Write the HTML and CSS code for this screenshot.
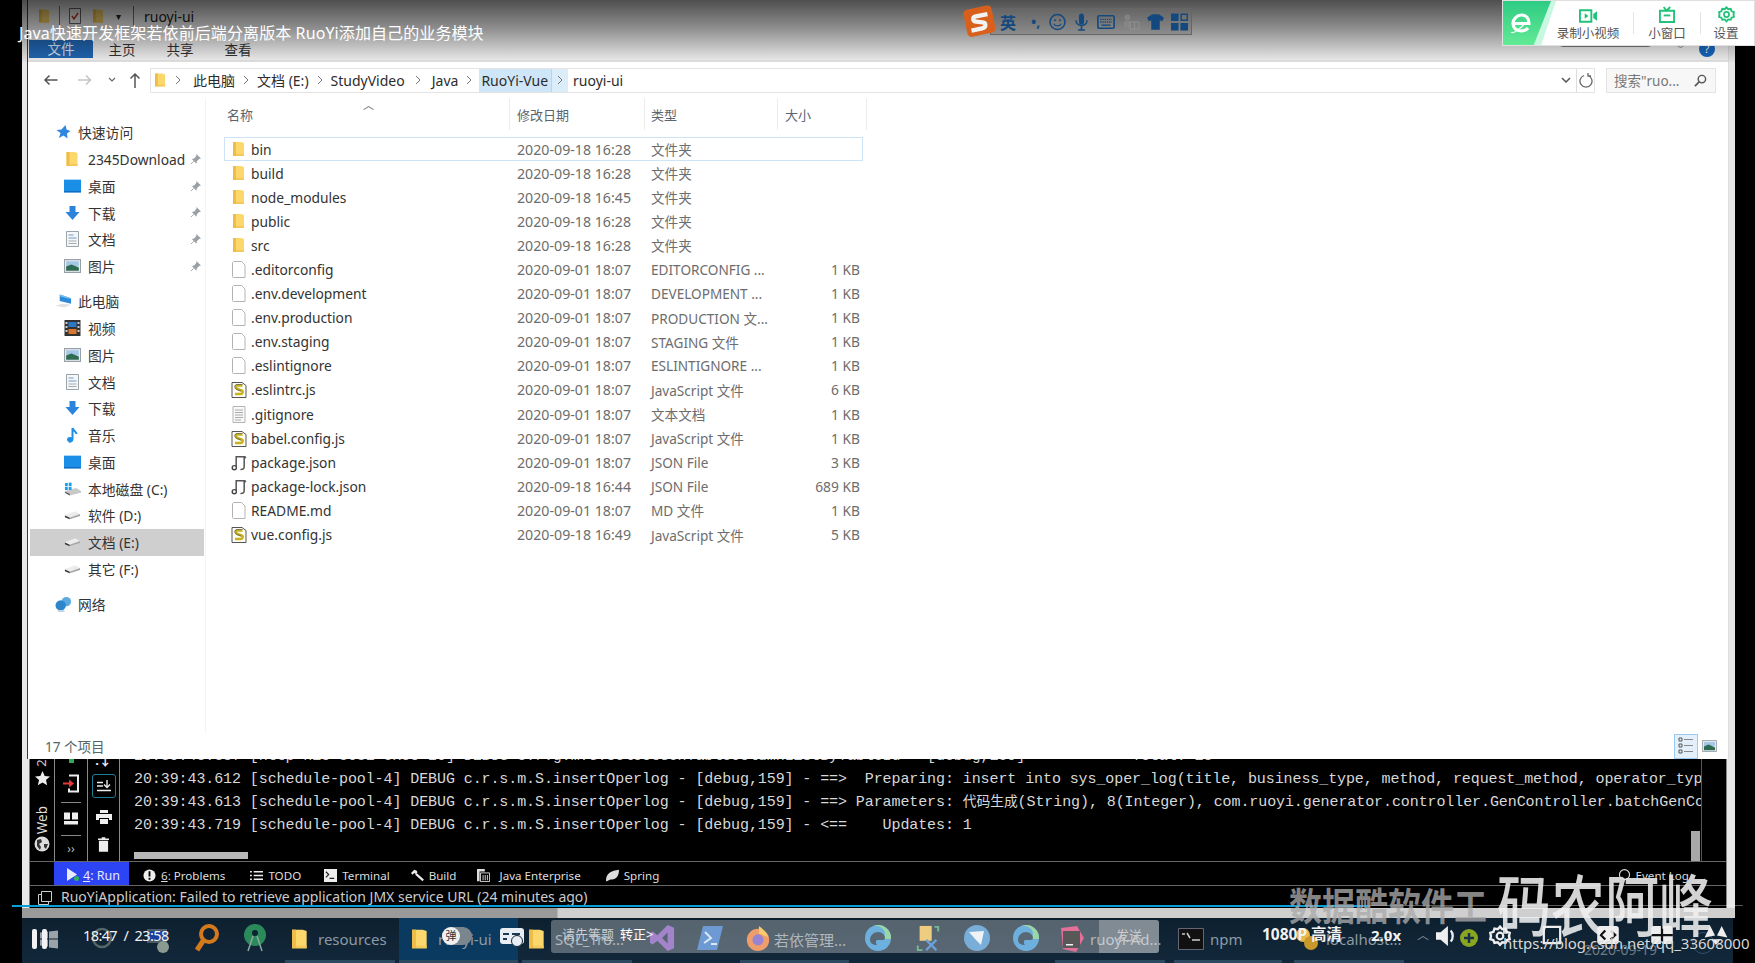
FILE: index.html
```html
<!DOCTYPE html>
<html lang="zh-CN">
<head>
<meta charset="utf-8">
<title>ruoyi-ui</title>
<link rel="stylesheet" href="styles.css">
</head>
<body>
<svg class="sprite" aria-hidden="true">
  <symbol id="i-folder" viewBox="0 0 12 16"><path fill="#fbd76c" d="M0 1h8l3 1v13H0z"/><path fill="#eebc48" d="M0 1h3v14H0z"/><path fill="#f6c95a" d="M3 13h8v2H3z"/></symbol>
  <symbol id="i-doc" viewBox="0 0 14 17"><path fill="#fff" stroke="#b4b4b4" d="M1.500 .5h8l3.500 3.500v12.500h-11.500a1 1 0 0 1-1-1v-14z"/></symbol>
  <symbol id="i-txt" viewBox="0 0 14 17"><path fill="#f8f8f8" stroke="#b4b4b4" d="M1 .5h12v16H1z"/><path stroke="#aaa" d="M3 4h8M3 6.500h8M3 9h8M3 11.500h8M3 14h6"/></symbol>
  <symbol id="i-js" viewBox="0 0 16 17"><path fill="#fdfdf6" stroke="#555" d="M1 1.500h10l4 3v12H1z"/><path fill="none" stroke="#c9b21a" stroke-width="2.600" d="M11.500 4.500H6.500c-2 0-2 3 0 3.500l4 1.500c2 .8 1 3.500-1 3.500H4"/><path fill="none" stroke="#555" stroke-width=".7" d="M11.500 3.500H6c-3 0-3 4 0 5l4 1.500"/></symbol>
  <symbol id="i-note" viewBox="0 0 17 17"><path fill="none" stroke="#555" stroke-width="1.600" d="M5.500 13V2.500h9c.8 0 1 .8.800 1.500M14 2.500V13c0 2-2 3-4 3"/><circle cx="3.500" cy="14" r="2.200" fill="#fff" stroke="#444" stroke-width="1.500"/></symbol>
  <symbol id="i-star" viewBox="0 0 16 16"><path fill="#2f86e0" d="M10 1l1 4.500 4 1.500-3.500 2.500 .5 5-4-3-4.500 2.500 1.500-5L1 6l5-.5z"/></symbol>
  <symbol id="i-pc" viewBox="0 0 18 16"><path fill="#dfe3e6" d="M0 13l8-2 9 1-7 3z"/><path fill="#2d8ad8" d="M5 1l12 4v6L5 8z"/><path fill="#7cc0f0" d="M5 1l12 4-1 1L5 3z"/></symbol>
  <symbol id="i-desk" viewBox="0 0 16 14"><path fill="#1b8fe8" d="M0 1h16v12H0z"/><path fill="#0f5fb0" d="M0 12h16v1H0z"/></symbol>
  <symbol id="i-down" viewBox="0 0 16 16"><path fill="#2c83dc" d="M5 1h6v6h4l-7 8-7-8h4z"/></symbol>
  <symbol id="i-page" viewBox="0 0 14 16"><path fill="#f4f6f8" stroke="#9ba3aa" d="M1 .5h12v15H1z"/><path stroke="#6f9cc5" d="M3 4h5M3 7h8"/><path stroke="#aaa" d="M3 10h8M3 12.500h8"/></symbol>
  <symbol id="i-pic" viewBox="0 0 16 13"><path fill="#f0f2f4" stroke="#98a0a8" d="M.5.500h15v12H.5z"/><path fill="#a5c8e6" d="M2 2h12v5H2z"/><path fill="#2f6b52" d="M2 7l5-2 7 3v3H2z"/></symbol>
  <symbol id="i-film" viewBox="0 0 16 16"><path fill="#333" d="M0 0h16v16H0z"/><path fill="#2a78c8" d="M4 2h8v5H4z"/><path fill="#d8772e" d="M4 9h8v5H4z"/><path fill="#ccc" d="M1 2h2v2H1zM1 6h2v2H1zM1 10h2v2H1zM13 2h2v2h-2zM13 6h2v2h-2zM13 10h2v2h-2z"/></symbol>
  <symbol id="i-music" viewBox="0 0 12 16"><path fill="none" stroke="#1c90e8" stroke-width="2" d="M6 1v11c0 2-2 3-3.500 2.500M6 1c.5 3 4 3 4 6"/><ellipse cx="3.500" cy="12.500" rx="3" ry="2.500" fill="#1c90e8"/></symbol>
  <symbol id="i-diskw" viewBox="0 0 18 14"><path fill="#c9c9c9" d="M1 9l12-3 5 3v2L6 14l-5-3z"/><path fill="#555" d="M1 10l5 2v2l-5-3z"/><path fill="#1c9be8" d="M1 1l3-.5V4H1zM5 .5l3-.5v4H5zM1 5h3v3H1zM5 5h3v3H5z"/></symbol>
  <symbol id="i-disk" viewBox="0 0 18 10"><path fill="#ececec" d="M1 5l11-4 5 3v2L6 9.500 1 7z"/><path fill="#a8a8a8" d="M17 4v2L6 9.500V8z"/><path fill="#333" d="M1 5.500l5 2.500v1.500L1 7.500z"/></symbol>
  <symbol id="i-net" viewBox="0 0 18 17"><circle cx="12" cy="6" r="5" fill="#5ba9e0"/><circle cx="6" cy="10" r="5.500" fill="#2d86cc"/><path fill="#c5d4de" d="M3 15h7v2H3z"/></symbol>
  <symbol id="i-pin" viewBox="0 0 12 12"><path fill="#9aa0a6" d="M7 0l5 5-2 .5-2.500 2.500-.5 2.500-5-5 2.500-.5L7 2z"/><path stroke="#9aa0a6" d="M4 8l-3 3"/></symbol>
  <symbol id="i-green-rec" viewBox="0 0 20 14"><path fill="none" stroke="#22c27a" stroke-width="2" d="M1 1h12v12H1z"/><path fill="#22c27a" d="M6 4l4 3-4 3zM15 5l4-3v10l-4-3z"/></symbol>
  <symbol id="i-green-tv" viewBox="0 0 17 18"><path fill="none" stroke="#22c27a" stroke-width="2" d="M1 5h15v12H1zM5 1l3 4 4-4"/><path fill="#22c27a" d="M5 9h7v2H5z"/></symbol>
  <symbol id="i-gear" viewBox="0 0 20 20"><path fill="none" stroke="currentColor" stroke-width="2.200" d="M10 1.500l2 2.300 3-.5 1 2.900 2.800 1-.6 2.800.6 2.800-2.800 1-1 2.400-3-.4-2 2.200-2-2.200-3 .4-1-2.400-2.800-1 .6-2.800-.6-2.800 2.800-1 1-2.900 3 .5z"/><circle cx="10" cy="10" r="3" fill="none" stroke="currentColor" stroke-width="2"/></symbol>
  <symbol id="i-chev" viewBox="0 0 8 10"><path fill="none" stroke="#777" d="M2 1l4 4-4 4"/></symbol>
  <symbol id="i-edge" viewBox="0 0 26 26"><circle cx="13" cy="13" r="13" fill="#2f8fd0"/><path fill="#70c480" d="M26 14A13 13 0 0 0 8 1c5-1 12 2 12 8 0 3-2 5-5 5h11z"/><path fill="#12283a" d="M5 15c0-5 4-8 8-8s7 3 7 6c0 2-2 2-4 2h-3c-2 0-3 2-1 5-4 0-7-2-7-5z"/></symbol>
</svg>

<div class="frame">
  <section class="explorer">
    <header class="ribbon">
      <div class="qat">
        <svg class="qat-folder"><use href="#i-folder"/></svg>
        <span class="qat-sep"></span>
        <svg class="qat-check" viewBox="0 0 12 16"><path fill="#fff" stroke="#666" d="M.5.500h11v15H.5z"/><path fill="none" stroke="#c0392b" stroke-width="1.500" d="M3 8l2 3 4-6"/></svg>
        <svg class="qat-folder2"><use href="#i-folder"/></svg>
        <span class="qat-drop">▾</span>
        <span class="qat-sep"></span>
        <span class="qat-title">ruoyi-ui</span>
      </div>
      <nav class="tabs">
        <span class="tab tab-on">文件</span>
        <span class="tab">主页</span>
        <span class="tab">共享</span>
        <span class="tab">查看</span>
        <span class="ribbon-pill"></span>
        <span class="ribbon-chev">﹀</span>
        <span class="ribbon-help">?</span>
      </nav>
    </header>

    <div class="addr">
      <svg class="nav-back" viewBox="0 0 14 12"><path fill="none" stroke="#555" stroke-width="1.500" d="M14 6H2M6 1.500L1.500 6 6 10.500"/></svg>
      <svg class="nav-fwd" viewBox="0 0 14 12"><path fill="none" stroke="#c4c4c4" stroke-width="1.500" d="M0 6h12M8 1.500L12.500 6 8 10.500"/></svg>
      <svg class="nav-menu" viewBox="0 0 8 6"><path fill="none" stroke="#666" stroke-width="1.200" d="M1 1l3 3 3-3"/></svg>
      <svg class="nav-up" viewBox="0 0 12 16"><path fill="none" stroke="#555" stroke-width="1.500" d="M6 16V2M1.500 6.500L6 2l4.500 4.500"/></svg>
      <div class="crumbs">
        <svg class="crumb-folder"><use href="#i-folder"/></svg>
        <svg class="chev chev-first"><use href="#i-chev"/></svg>
        <span class="crumb">此电脑</span>
        <svg class="chev"><use href="#i-chev"/></svg>
        <span class="crumb">文档 (E:)</span>
        <svg class="chev"><use href="#i-chev"/></svg>
        <span class="crumb">StudyVideo</span>
        <svg class="chev chev-java"><use href="#i-chev"/></svg>
        <span class="crumb">Java</span>
        <svg class="chev"><use href="#i-chev"/></svg>
        <span class="crumb-hot"><span class="crumb-hot-t">RuoYi-Vue</span><span class="crumb-hot-c"><svg class="chev"><use href="#i-chev"/></svg></span></span>
        <span class="crumb crumb-last">ruoyi-ui</span>
        <span class="crumb-end">
          <svg class="crumb-dd" viewBox="0 0 10 6"><path fill="none" stroke="#555" stroke-width="1.500" d="M1 1l4 4 4-4"/></svg>
          <span class="crumb-ref"><svg viewBox="0 0 14 16" class="ref-ico"><path fill="none" stroke="#666" stroke-width="1.300" d="M5 3.500A6 6 0 1 0 9 3.500M9 1v3h3"/></svg></span>
        </span>
      </div>
      <div class="search"><span>搜索"ruo...</span><svg class="search-ico" viewBox="0 0 14 14"><circle cx="8.500" cy="5.500" r="4" fill="none" stroke="#555" stroke-width="1.500"/><path stroke="#555" stroke-width="1.800" d="M5.500 8.500L1 13"/></svg></div>
    </div>

    <div class="body">
      <aside class="side">
        <div class="s-row s-head"><svg class="si"><use href="#i-star"/></svg><span>快速访问</span></div>
        <div class="s-row"><svg class="si si-f"><use href="#i-folder"/></svg><span>2345Download</span><svg class="pin"><use href="#i-pin"/></svg></div>
        <div class="s-row"><svg class="si"><use href="#i-desk"/></svg><span>桌面</span><svg class="pin"><use href="#i-pin"/></svg></div>
        <div class="s-row"><svg class="si"><use href="#i-down"/></svg><span>下载</span><svg class="pin"><use href="#i-pin"/></svg></div>
        <div class="s-row"><svg class="si"><use href="#i-page"/></svg><span>文档</span><svg class="pin"><use href="#i-pin"/></svg></div>
        <div class="s-row"><svg class="si"><use href="#i-pic"/></svg><span>图片</span><svg class="pin"><use href="#i-pin"/></svg></div>
        <div class="s-row s-head s-gap"><svg class="si"><use href="#i-pc"/></svg><span>此电脑</span></div>
        <div class="s-row"><svg class="si"><use href="#i-film"/></svg><span>视频</span></div>
        <div class="s-row"><svg class="si"><use href="#i-pic"/></svg><span>图片</span></div>
        <div class="s-row"><svg class="si"><use href="#i-page"/></svg><span>文档</span></div>
        <div class="s-row"><svg class="si"><use href="#i-down"/></svg><span>下载</span></div>
        <div class="s-row"><svg class="si"><use href="#i-music"/></svg><span>音乐</span></div>
        <div class="s-row"><svg class="si"><use href="#i-desk"/></svg><span>桌面</span></div>
        <div class="s-row"><svg class="si"><use href="#i-diskw"/></svg><span>本地磁盘 (C:)</span></div>
        <div class="s-row"><svg class="si"><use href="#i-disk"/></svg><span>软件 (D:)</span></div>
        <div class="s-row s-sel"><svg class="si"><use href="#i-disk"/></svg><span>文档 (E:)</span></div>
        <div class="s-row"><svg class="si"><use href="#i-disk"/></svg><span>其它 (F:)</span></div>
        <div class="s-row s-head s-gap"><svg class="si"><use href="#i-net"/></svg><span>网络</span></div>
      </aside>
      <main class="list">
        <div class="thead">
          <span class="th">名称<span class="sort">︿</span></span>
          <span class="th th-d">修改日期</span>
          <span class="th th-t">类型</span>
          <span class="th th-s">大小</span>
        </div>
        <div class="row row-sel"><span class="n"><svg class="fi fi-f"><use href="#i-folder"/></svg>bin</span><span class="d">2020-09-18 16:28</span><span class="t">文件夹</span><span class="z"></span></div>
        <div class="row"><span class="n"><svg class="fi fi-f"><use href="#i-folder"/></svg>build</span><span class="d">2020-09-18 16:28</span><span class="t">文件夹</span><span class="z"></span></div>
        <div class="row"><span class="n"><svg class="fi fi-f"><use href="#i-folder"/></svg>node_modules</span><span class="d">2020-09-18 16:45</span><span class="t">文件夹</span><span class="z"></span></div>
        <div class="row"><span class="n"><svg class="fi fi-f"><use href="#i-folder"/></svg>public</span><span class="d">2020-09-18 16:28</span><span class="t">文件夹</span><span class="z"></span></div>
        <div class="row"><span class="n"><svg class="fi fi-f"><use href="#i-folder"/></svg>src</span><span class="d">2020-09-18 16:28</span><span class="t">文件夹</span><span class="z"></span></div>
        <div class="row"><span class="n"><svg class="fi"><use href="#i-doc"/></svg>.editorconfig</span><span class="d">2020-09-01 18:07</span><span class="t">EDITORCONFIG ...</span><span class="z">1 KB</span></div>
        <div class="row"><span class="n"><svg class="fi"><use href="#i-doc"/></svg>.env.development</span><span class="d">2020-09-01 18:07</span><span class="t">DEVELOPMENT ...</span><span class="z">1 KB</span></div>
        <div class="row"><span class="n"><svg class="fi"><use href="#i-doc"/></svg>.env.production</span><span class="d">2020-09-01 18:07</span><span class="t">PRODUCTION 文...</span><span class="z">1 KB</span></div>
        <div class="row"><span class="n"><svg class="fi"><use href="#i-doc"/></svg>.env.staging</span><span class="d">2020-09-01 18:07</span><span class="t">STAGING 文件</span><span class="z">1 KB</span></div>
        <div class="row"><span class="n"><svg class="fi"><use href="#i-doc"/></svg>.eslintignore</span><span class="d">2020-09-01 18:07</span><span class="t">ESLINTIGNORE ...</span><span class="z">1 KB</span></div>
        <div class="row"><span class="n"><svg class="fi"><use href="#i-js"/></svg>.eslintrc.js</span><span class="d">2020-09-01 18:07</span><span class="t">JavaScript 文件</span><span class="z">6 KB</span></div>
        <div class="row"><span class="n"><svg class="fi"><use href="#i-txt"/></svg>.gitignore</span><span class="d">2020-09-01 18:07</span><span class="t">文本文档</span><span class="z">1 KB</span></div>
        <div class="row"><span class="n"><svg class="fi"><use href="#i-js"/></svg>babel.config.js</span><span class="d">2020-09-01 18:07</span><span class="t">JavaScript 文件</span><span class="z">1 KB</span></div>
        <div class="row"><span class="n"><svg class="fi"><use href="#i-note"/></svg>package.json</span><span class="d">2020-09-01 18:07</span><span class="t">JSON File</span><span class="z">3 KB</span></div>
        <div class="row"><span class="n"><svg class="fi"><use href="#i-note"/></svg>package-lock.json</span><span class="d">2020-09-18 16:44</span><span class="t">JSON File</span><span class="z">689 KB</span></div>
        <div class="row"><span class="n"><svg class="fi"><use href="#i-doc"/></svg>README.md</span><span class="d">2020-09-01 18:07</span><span class="t">MD 文件</span><span class="z">1 KB</span></div>
        <div class="row"><span class="n"><svg class="fi"><use href="#i-js"/></svg>vue.config.js</span><span class="d">2020-09-18 16:49</span><span class="t">JavaScript 文件</span><span class="z">5 KB</span></div>
      </main>
    </div>

    <footer class="status">
      <span class="status-t">17 个项目</span>
      <span class="view view-on"><svg class="view-i" viewBox="0 0 16 18"><path fill="none" stroke="#555" d="M1 1h3v3H1zM1 7h3v3H1zM1 13h3v3H1z"/><path stroke="#888" d="M6 2.500h9M6 8.500h9M6 14.500h9"/></svg></span>
      <span class="view"><svg class="view-i2"><use href="#i-pic"/></svg></span>
    </footer>
  </section>

  <section class="ide">
    <div class="ide-main">
      <div class="tw tw1">
        <span class="tw1-num">2</span>
        <svg class="tw-star" viewBox="0 0 16 16"><path fill="#eee" d="M8 0l2.300 5.300 5.700.5-4.300 3.800 1.300 5.700L8 12.300l-5 3 1.300-5.700L0 5.800l5.700-.5z"/></svg>
        <span class="tw-web">Web</span>
        <svg class="tw-globe" viewBox="0 0 16 16"><circle cx="8" cy="8" r="7.500" fill="#ddd"/><path fill="#333" d="M3 4l4-1 1 3-3 2 2 3-1 3-3-4zM10 8l4 0-2 5-2-2z"/></svg>
      </div>
      <div class="tw tw2">
        <span class="tw-dot"></span>
        <svg class="tw-login" viewBox="0 0 16 18"><path fill="none" stroke="#eee" stroke-width="2" d="M6 1h9v16H6v-3"/><path fill="#e53935" d="M0 8h6V5l5 4-5 4v-3H0z"/></svg>
        <span class="tw-sep"></span>
        <svg class="tw-lay" viewBox="0 0 14 12"><path fill="#eee" d="M0 0h6v7H0zM8 0h6v7H8zM0 8.500h14V12H0z"/></svg>
        <span class="tw-sep"></span>
        <span class="tw-more">››</span>
      </div>
      <div class="tw tw3">
        <span class="tw-partial">.↓</span>
        <span class="tw-box"><svg class="tw-scroll" viewBox="0 0 14 12"><path stroke="#eee" stroke-width="1.400" d="M0 2.500h6M0 6h6M0 10.500h14M10 0v7"/><path fill="none" stroke="#eee" stroke-width="1.400" d="M7 4.500l3 3 3-3"/></svg></span>
        <svg class="tw-print" viewBox="0 0 16 14"><path fill="#eee" d="M4 0h8v3H4zM0 4h16v6h-3V8H3v2H0zM4 9h8v5H4z"/></svg>
        <svg class="tw-trash" viewBox="0 0 12 16"><path fill="#eee" d="M4 0h4v1.500h4V3H0V1.500h4zM1 4h10v12H1z"/></svg>
      </div>
      <div class="log">
        <pre class="log-l">20:39:43.387 [http-nio-8081-exec-20] DEBUG c.r.g.m.G.selectGenTableColumnListByTableId - [debug,159] - &lt;==      Total: 18</pre>
        <pre class="log-l">20:39:43.612 [schedule-pool-4] DEBUG c.r.s.m.S.insertOperlog - [debug,159] - ==&gt;  Preparing: insert into sys_oper_log(title, business_type, method, request_method, operator_type, oper_name)</pre>
        <pre class="log-l">20:39:43.613 [schedule-pool-4] DEBUG c.r.s.m.S.insertOperlog - [debug,159] - ==&gt; Parameters: <span class="log-cjk">代码生成</span>(String), 8(Integer), com.ruoyi.generator.controller.GenController.batchGenCode()</pre>
        <pre class="log-l">20:39:43.719 [schedule-pool-4] DEBUG c.r.s.m.S.insertOperlog - [debug,159] - &lt;==    Updates: 1</pre>
        <span class="log-hbar"></span>
        <span class="log-vbar"></span>
      </div>
    </div>
    <div class="tool">
      <span class="t-run"><svg class="t-play" viewBox="0 0 12 14"><path fill="#e8eaff" d="M0 0l11 7-11 7z"/></svg><span class="t-dotg"></span><span><u>4</u>: Run</span></span>
      <span class="t-item t-prob"><svg class="t-ico" viewBox="0 0 14 14"><circle cx="7" cy="7" r="6.500" fill="#eee"/><path fill="#000" d="M6 2.500h2v5.500H6zM6 9.500h2v2H6z"/></svg><span><u>6</u>: Problems</span></span>
      <span class="t-item t-todo"><svg class="t-ico" viewBox="0 0 14 12"><path stroke="#eee" stroke-width="1.600" d="M0 2h2M4 2h10M0 6h2M4 6h10M0 10h2M4 10h10"/></svg><span>TODO</span></span>
      <span class="t-item t-term"><svg class="t-ico" viewBox="0 0 14 14"><path fill="#eee" d="M0 0h14v14H0z"/><path fill="none" stroke="#222" stroke-width="1.300" d="M2 3l3 3-3 3M6 10h5"/></svg><span>Terminal</span></span>
      <span class="t-item t-build"><svg class="t-ico" viewBox="0 0 16 14"><path fill="#eee" d="M0 4l4-4 3 1 1 2-2 2-2-1-2 2z"/><path stroke="#eee" stroke-width="2.500" d="M6 5l9 8"/></svg><span>Build</span></span>
      <span class="t-item t-jee"><svg class="t-ico" viewBox="0 0 15 15"><path fill="#ddd" d="M0 0h9v3H3v11H0z"/><path fill="none" stroke="#eee" d="M4 4.500h10.500v10H4z"/><path stroke="#eee" d="M7 7v6M9.500 7v6M12 7v6"/></svg><span class="t-jee-t">Java Enterprise</span></span>
      <span class="t-item t-spring"><svg class="t-ico" viewBox="0 0 15 13"><path fill="#dcdcdc" d="M0 13C0 4 6 1 15 0c0 8-4 12-10 11L1 13z"/></svg><span>Spring</span></span>
      <span class="t-item t-event"><svg class="t-ico" viewBox="0 0 13 15"><circle cx="6.500" cy="6.500" r="5.800" fill="none" stroke="#ddd" stroke-width="1.300"/><path stroke="#ddd" stroke-width="1.300" d="M9 12l3 3"/></svg><span>Event Log</span></span>
    </div>
    <div class="ide-status">
      <svg class="st-ico" viewBox="0 0 14 14"><path fill="none" stroke="#ccc" d="M3.500.5h10v10h-10zM3 3.500H.5v10h10V11"/></svg>
      <span>RuoYiApplication: Failed to retrieve application JMX service URL (24 minutes ago)</span>
    </div>
  </section>
  <div class="hscroll"></div>
</div>

<div class="taskbar">
  <span class="tb-win"><svg class="tb-winlogo" viewBox="0 0 18 18"><path fill="#9aa3aa" d="M0 2l8-1v7H0zM9 1l9-1v8H9zM0 9h8v7l-8-1zM9 9h9v9l-9-1z"/></svg></span>
  <span class="tb-cell"><svg class="tb-circle" viewBox="0 0 22 22"><circle cx="11" cy="11" r="9" fill="none" stroke="#566" stroke-width="2.500"/></svg></span>
  <span class="tb-cell tb-gap"><svg class="tb-pc" viewBox="0 0 24 24"><path fill="#4a5a66" d="M0 0h20v14H0z"/><path fill="#1a3fa0" d="M2 2h16v9H2z"/><circle cx="16" cy="18" r="6" fill="#8a9a90"/></svg></span>
  <span class="tb-cell"><svg class="tb-find" viewBox="0 0 24 28"><circle cx="14" cy="10" r="8" fill="none" stroke="#d57a1c" stroke-width="4"/><path stroke="#d57a1c" stroke-width="5" d="M8 17L2 26"/></svg></span>
  <span class="tb-cell"><svg class="tb-android" viewBox="0 0 24 28"><circle cx="12" cy="11" r="11" fill="#2b8a5a"/><circle cx="12" cy="9" r="3" fill="#0d2233"/><path stroke="#8fa5a0" stroke-width="1.500" d="M10 12L5 27M14 12l5 15"/></svg></span>
  <span class="tb-task tb-t1"><svg class="tb-folder"><use href="#i-folder"/></svg><span>resources</span></span>
  <span class="tb-task tb-active"><svg class="tb-folder"><use href="#i-folder"/></svg><span>ruoyi-ui</span></span>
  <span class="tb-task tb-t3"><svg class="tb-folder"><use href="#i-folder"/></svg><span>SQL_Tro...</span></span>
  <span class="tb-cell tb-vs"><svg class="tb-ic" viewBox="0 0 26 28"><path fill="#7b4fb5" d="M19 0l7 3v22l-7 3L8 17l-5 4-3-2V9l3-2 5 4zM19 8l-6 6 6 6z"/></svg></span>
  <span class="tb-cell"><svg class="tb-ic" viewBox="0 0 26 24"><path fill="#2f6fc0" d="M6 0h20l-6 24H0z"/><path fill="none" stroke="#cde" stroke-width="2" d="M8 6l6 6-7 5M14 18h6"/></svg></span>
  <span class="tb-task tb-t4"><svg class="tb-ic" viewBox="0 0 26 28"><circle cx="13" cy="15" r="12" fill="#e8742c"/><circle cx="13" cy="15" r="6" fill="#6a4fc0"/><path fill="#f5b62e" d="M14 0c4 3 8 6 10 12L14 8z"/></svg><span>若依管理...</span></span>
  <span class="tb-cell tb-dev"><svg class="tb-ic tb-edge-dev"><use href="#i-edge"/></svg></span>
  <span class="tb-cell tb-m2"><svg class="tb-ic" viewBox="0 0 24 28"><path fill="#e8b84a" d="M3 1h13v16H3z"/><path fill="none" stroke="#3c9b6a" stroke-width="2" d="M19 2h4v5M1 22v5h5"/><path stroke="#2f78c8" stroke-width="2.500" d="M10 27l11-11M10 16l11 11"/></svg></span>
  <span class="tb-cell tb-m1"><svg class="tb-ic" viewBox="0 0 26 26"><circle cx="13" cy="13" r="13" fill="#3f8cc8"/><path fill="#e6eef4" d="M5 7l15-1-3 14-5-5z"/></svg></span>
  <span class="tb-cell tb-m1 tb-gap2"><svg class="tb-ic"><use href="#i-edge"/></svg></span>
  <span class="tb-task tb-t5"><svg class="tb-ic" viewBox="0 0 26 26"><path fill="#d6336c" d="M3 2l16-2 7 12-8 14-13-3z"/><path fill="#111" d="M5 5h17v17H5z"/><path fill="#eee" d="M8 18h7v1.500H8z"/></svg><span>ruoyi-Ad...</span></span>
  <span class="tb-task tb-t6"><svg class="tb-ic tb-cmd" viewBox="0 0 26 22"><path fill="#111" stroke="#667" d="M.5.500h25v21H.5z"/><path stroke="#ccc" stroke-width="1.500" d="M4 6h3M9 5l3 5M14 12h8"/></svg><span>npm</span></span>
  <span class="tb-task tb-t7"><svg class="tb-ic" viewBox="0 0 26 26"><circle cx="9" cy="9" r="7" fill="#e8b84a"/><circle cx="17" cy="17" r="7" fill="#c8982a"/></svg><span>localhost...</span></span>
  <span class="tb-caret">︿</span>
  <span class="tb-tray"><svg class="tb-plus" viewBox="0 0 18 18"><circle cx="9" cy="9" r="9" fill="#8aa520"/><path stroke="#17304a" stroke-width="2.500" d="M4 9h10M9 4v10"/></svg></span>
  <span class="tb-clock">2020-09-19</span>
  <span class="tb-noti"></span>
</div>

<div class="shade"></div>
<div class="title">Java快速开发框架若依前后端分离版本 RuoYi添加自己的业务模块</div>

<div class="ime">
  <svg class="ime-s" viewBox="0 0 32 32"><rect x="2" y="3" width="27" height="26" rx="4" fill="#d8601c" transform="rotate(-12 16 16)"/><path fill="none" stroke="#f2f2f2" stroke-width="4" d="M23 9.500l-11 2.200c-3.500 .8-3 4.800 .5 5l6 .5c3.500 .4 3.500 5-.5 5.800l-10 2"/></svg>
  <span class="ime-zh">英</span>
  <span class="ime-p">•,</span>
  <svg class="ime-i" viewBox="0 0 20 20"><circle cx="10" cy="10" r="8.800" fill="none" stroke="#14497f" stroke-width="1.800"/><circle cx="7" cy="8" r="1.200" fill="#14497f"/><circle cx="13" cy="8" r="1.200" fill="#14497f"/><path fill="none" stroke="#14497f" stroke-width="1.400" d="M5.500 12c2 3.500 7 3.500 9 0"/></svg>
  <svg class="ime-i" viewBox="0 0 20 20"><rect x="7" y="0" width="6" height="13" rx="3" fill="#14497f"/><path fill="none" stroke="#14497f" stroke-width="1.800" d="M3.500 8c0 8 13 8 13 0M10 15v4M6 19.500h8"/></svg>
  <svg class="ime-i ime-w" viewBox="0 0 20 16"><rect x="1" y="1" width="18" height="14" rx="1.500" fill="none" stroke="#14497f" stroke-width="1.800"/><path stroke="#14497f" stroke-width="1.500" stroke-dasharray="1.500 1" d="M3.500 5h13M3.500 8h13"/><path stroke="#14497f" stroke-width="1.500" d="M5 11.500h10"/></svg>
  <svg class="ime-i ime-w ime-dim" viewBox="0 0 20 18"><circle cx="6" cy="4" r="3.200" fill="#888"/><path fill="#888" d="M2 8h8v8H2z"/><path fill="none" stroke="#999" d="M9 9h10v8H9zM14 9v8"/></svg>
  <svg class="ime-i" viewBox="0 0 20 18"><path fill="#14497f" d="M6 0h8l6 4-2 4-3-1v11H5V7L2 8 0 4z"/></svg>
  <svg class="ime-i" viewBox="0 0 18 18"><path fill="#14497f" d="M0 0h8v8H0zM10 10h8v8h-8zM0 10h8v8H0z"/><path fill="none" stroke="#14497f" stroke-width="1.500" d="M10.800.800h6.400v6.400h-6.400z"/></svg>
</div>

<aside class="card">
  <span class="card-stripe"></span>
  <span class="card-logo"><svg class="card-e" viewBox="0 0 22 24"><path fill="none" stroke="#fff" stroke-width="3.200" d="M4 12.500h15c0-5-3-8.500-7.500-8.500S3 8 3 12.500 6.500 20 11 20c3 0 5.500-1 7-3"/><path fill="none" stroke="#fff" stroke-width="1.200" d="M1.500 21c1 2 6-1 12-7"/></svg></span>
  <span class="card-i card-i1"><svg class="card-rec"><use href="#i-green-rec"/></svg><span>录制小视频</span></span>
  <span class="card-sep"></span>
  <span class="card-i card-i2"><svg class="card-tv"><use href="#i-green-tv"/></svg><span>小窗口</span></span>
  <span class="card-sep"></span>
  <span class="card-i card-i3"><svg class="card-gear"><use href="#i-gear"/></svg><span>设置</span></span>
</aside>

<div class="progress"><span class="progress-on"></span></div>

<div class="danmu"><span class="danmu-k">弹</span></div>
<svg class="danmu-set" viewBox="0 0 24 20"><rect width="24" height="16" rx="3" fill="#e8eef4"/><path stroke="#1b3a55" stroke-width="2" d="M3 6h6M12 6h8M3 11h4"/><circle cx="17" cy="13" r="5.500" fill="#e8eef4" stroke="#12283a"/></svg>
<div class="tip"><span class="tip-a">请先等题</span><span class="tip-b">转正&gt;</span><span class="tip-send">发送</span></div>

<div class="ctl-time">18:47&nbsp; / &nbsp;23:58</div>
<div class="ctl-pause"><span></span><span></span></div>
<div class="ctl-q">1080P 高清</div>
<div class="ctl-r">2.0x</div>
<svg class="ctl-vol" viewBox="0 0 24 24"><path fill="#eee" d="M0 8h5l8-7v22l-8-7H0z"/><path fill="none" stroke="#eee" stroke-width="2.500" d="M16 6c3 3 3 9 0 12"/></svg>
<svg class="ctl-gear"><use href="#i-gear"/></svg>
<svg class="ctl-pip" viewBox="0 0 22 22"><path fill="none" stroke="#eee" stroke-width="2.500" d="M2 2h18v18H2z"/></svg>
<svg class="ctl-wide" viewBox="0 0 24 20"><rect width="24" height="20" rx="3" fill="#eee"/><path fill="none" stroke="#111" stroke-width="2.500" d="M9 5l-5 5 5 5M15 5l5 5-5 5"/></svg>
<svg class="ctl-full" viewBox="0 0 24 20"><rect width="24" height="20" rx="3" fill="#eee"/><path stroke="#111" stroke-width="2.500" d="M12 0v20M0 10h24"/></svg>
<svg class="ctl-tri" viewBox="0 0 24 20"><path fill="#eee" d="M0 12L6 0l5 10zM13 10l5-10 6 12zM7 14h10l-5 6z"/></svg>

<div class="wm-a">数据酷软件工</div>
<div class="wm-b">码农阿峰</div>
<div class="wm-url">https://blog.csdn.net/qq_33608000</div>
</body>
</html>
```
FILE: styles.css
```css
* { box-sizing: border-box; }
html, body { margin: 0; height: 100%; }
body {
  position: relative;
  width: 1755px;
  height: 963px;
  overflow: hidden;
  background: #000;
  font-family: "Noto Sans", "Noto Sans CJK SC", sans-serif;
  font-size: 14px;
  color: #333;
}
svg { display: block; flex: none; }
.sprite { position: absolute; width: 0; height: 0; }

.frame { margin-left: 22px; width: 1713px; height: 918px; background: #e8e8e8; display: flex; flex-direction: column; }

/* explorer */
.explorer { margin-left: 5px; height: 759px; flex: none; background: #fff; border-left: 1px solid #3a3a3a; border-right: 1px solid #ddd; margin-right: 6px; display: flex; flex-direction: column; }
.ribbon { height: 62px; flex: none; background: #f3f3f3; border-bottom: 2px solid #e4e4e4; display: flex; flex-direction: column; }
.qat { height: 40px; display: flex; align-items: flex-start; padding: 6px 0 0 11px; gap: 9px; }
.qat-folder { width: 11px; height: 20px; }
.qat-sep { width: 1px; height: 22px; background: #777; }
.qat-check { width: 12px; height: 20px; }
.qat-folder2 { width: 11px; height: 20px; margin-left: 3px; }
.qat-drop { font-size: 10px; line-height: 20px; color: #222; margin-left: 3px; margin-right: 3px; }
.qat-title { margin-left: 1px; line-height: 22px; font-size: 14px; color: #222; }
.tabs { height: 18px; display: flex; align-items: center; padding-left: 1px; position: relative; }
.tab { width: 58px; text-align: center; font-size: 13.500px; color: #333; }
.tab-on { width: 64px; height: 18px; line-height: 18px; margin-right: 0; background: #2267b4; color: #dfe9f6; }
.ribbon-pill { margin-left: auto; margin-right: 22px; width: 95px; height: 5px; margin-top: -9px; border-radius: 0 0 8px 8px; background: #7a7a7a; }
.ribbon-chev { font-size: 11px; color: #888; margin-right: 13px; }
.ribbon-help { width: 16px; height: 16px; margin-right: 13px; border-radius: 50%; background: #1768c0; color: #fff; font-size: 11px; line-height: 16px; text-align: center; }

.addr { height: 36px; flex: none; display: flex; align-items: center; padding: 0 16px 0 15px; background: #fff; }
.nav-back { width: 15px; height: 12px; }
.nav-fwd { width: 14px; height: 12px; margin-left: 20px; }
.nav-menu { width: 8px; height: 6px; margin-left: 16px; }
.nav-up { width: 12px; height: 16px; margin-left: 13px; }
.crumbs { margin-left: 9px; width: 1445px; height: 25px; flex: none; border: 1px solid #e4e4e4; display: flex; align-items: center; background: #fff; font-size: 14px; color: #2c2c2c; }
.crumb-folder { width: 11px; height: 18px; margin-left: 4px; }
.chev { width: 8px; height: 10px; margin: 0 7px; }
.chev-first { margin-left: 8px; margin-right: 11px; }
.chev-java { margin-left: 9px; margin-right: 10px; }
.crumb { white-space: nowrap; }
.crumb-hot { display: flex; height: 23px; background: #cfe6f8; align-items: center; margin-left: -1px; }
.crumb-hot-t { padding: 0 3px 0 2px; white-space: nowrap; }
.crumb-hot-c { height: 23px; display: flex; align-items: center; border-left: 1px solid #b4d6f0; background: #dcedfa; }
.crumb-hot-c .chev { margin: 0 4px; }
.crumb-last { margin-left: 5px; }
.crumb-end { margin-left: auto; display: flex; align-items: center; height: 23px; }
.crumb-dd { width: 10px; height: 6px; margin-right: 5px; }
.crumb-ref { height: 23px; width: 18px; border-left: 1px solid #ddd; display: flex; align-items: center; justify-content: center; }
.ref-ico { width: 14px; height: 16px; }
.search { margin-left: 11px; width: 110px; height: 25px; flex: none; border: 1px solid #e4e4e4; background: #f7f7f7; display: flex; align-items: center; padding: 0 8px 0 7px; color: #777; font-size: 13.500px; justify-content: space-between; }
.search-ico { width: 13px; height: 13px; }

.body { flex: 1; display: flex; min-height: 0; }
.side { padding: 21px 0 0 2px; flex: none; border-right: 1px solid #f4f4f4; width: 178px; }
.s-row { height: 26.750px; display: flex; align-items: center; padding-left: 34px; font-size: 13.800px; color: #333; position: relative; white-space: nowrap; }
.s-head { padding-left: 25px; }
.s-gap { margin-top: 8.600px; }
.s-sel { background: #cfcfcf; width: 174px; }
.si { width: 17px; height: 16px; margin-right: 7px; }
.s-head .si { margin-right: 6px; }
.si-f { height: 16px; }
.pin { position: absolute; left: 160px; top: 8px; width: 11px; height: 11px; }

.list { flex: 1; padding-left: 18px; min-width: 0; }
.thead { width: 643px; height: 39px; display: grid; grid-template-columns: 286px 135px 133px 89px; padding-bottom: 7px; }
.th { display: flex; align-items: center; padding-left: 3px; color: #5b6570; font-size: 13px; border-right: 1px solid #ececec; }
.th-d { padding-left: 7px; }
.th-t { padding-left: 6px; }
.th-s { padding-left: 7px; }
.sort { margin-left: 110px; align-self: flex-start; font-size: 11px; line-height: 12px; margin-top: 1px; color: #777; }
.row { width: 639px; height: 24.100px; display: grid; grid-template-columns: 292px 134px 127px 84px; align-items: center; border: 1px solid transparent; font-size: 13.800px; color: #333; white-space: nowrap; }
.row-sel { border-color: #cde4f7; border-width: 1.500px; }
.n { display: flex; align-items: center; padding-left: 6px; }
.fi { width: 16px; height: 17px; margin-right: 4px; }
.fi-f { height: 16px; }
.d { font-size: 14.200px; color: #6d6d6d; }
.t { font-size: 13.600px; color: #6d6d6d; }
.z { font-size: 13.800px; color: #6d6d6d; text-align: right; padding-right: 2px; }

.status { height: 26px; flex: none; display: flex; align-items: center; padding: 0 10px 0 17px; gap: 3px; background: #fff; }
.status-t { margin-right: auto; font-size: 13.500px; color: #566; }
.view { width: 17px; height: 25px; display: flex; align-items: center; justify-content: center; }
.view-on { width: 24px; background: #e3f0fb; border: 1px solid #9ccbee; }
.view-i { width: 16px; height: 18px; }
.view-i2 { width: 15px; height: 12px; }

/* ide */
.ide { margin-left: 7px; margin-right: 8px; height: 149px; flex: none; background: #000; border-left: 1px solid #777; border-right: 1px solid #888; display: flex; flex-direction: column; color: #d8d8d8; }
.ide-main { height: 103px; flex: none; display: flex; overflow: hidden; border-bottom: 1px solid #666; }
.tw { flex: none; display: flex; flex-direction: column; align-items: center; position: relative; border-right: 1px solid #888; }
.tw1 { width: 25px; }
.tw2 { width: 33px; }
.tw3 { width: 32px; }
.tw1-num { height: 8px; font-size: 13px; line-height: 6px; transform: rotate(-90deg); color: #ccc; }
.tw-star { width: 15px; height: 15px; margin-top: 4px; }
.tw-web { margin-top: 20px; writing-mode: vertical-rl; transform: rotate(180deg); font-size: 13.500px; line-height: 16px; color: #ddd; }
.tw-globe { width: 16px; height: 16px; margin-top: 2px; }
.tw-dot { width: 5px; height: 4px; background: #2eaa55; }
.tw-login { width: 16px; height: 19px; margin-top: 11px; }
.tw-sep { width: 20px; height: 1px; background: #888; margin-top: 9px; }
.tw-lay { width: 14px; height: 13px; margin-top: 9px; }
.tw-lay + .tw-sep { margin-top: 10px; }
.tw-more { margin-top: 6px; font-size: 12px; line-height: 14px; color: #bbb; }
.tw-partial { height: 6px; line-height: 3px; font-size: 13px; font-weight: 700; color: #eee; }
.tw-box { width: 24px; height: 24px; margin-top: 9px; border: 1.500px solid #1d7d98; border-radius: 3px; display: flex; align-items: center; justify-content: center; }
.tw-scroll { width: 14px; height: 12px; }
.tw-print { width: 16px; height: 14px; margin-top: 12px; }
.tw-trash { width: 11px; height: 15px; margin-top: 13px; }
.log { flex: 1; min-width: 0; position: relative; padding-left: 14px; overflow: hidden; margin-right: 24px; border-right: 1px solid #555; }
.log-l { margin: 0; height: 23px; line-height: 23px; font-family: "Liberation Mono", "Noto Sans CJK SC", monospace; font-size: 15px; letter-spacing: -.09px; color: #d8d8d8; white-space: pre; }
.log-l:first-child { margin-top: -14px; }
.log-cjk { font-size: 13.800px; }
.log-hbar { position: absolute; left: 14px; top: 93px; width: 114px; height: 7px; background: #b8b8b8; }
.log-vbar { position: absolute; right: 1px; top: 72px; width: 9px; height: 30px; background: #a8a8a8; }
.tool { height: 24px; flex: none; display: flex; align-items: center; border-bottom: 1px solid #666; font-size: 11.600px; white-space: nowrap; color: #ddd; }
.t-run { margin-left: 24px; width: 75px; height: 23px; background: #2d44f5; display: flex; align-items: center; padding: 4px 0 0 13px; position: relative; color: #e6e8ff; font-size: 12.500px; }
.t-play { width: 11px; height: 13px; margin-right: 5px; margin-top: -3px; }
.t-dotg { position: absolute; left: 20px; top: 14px; width: 5px; height: 5px; border-radius: 50%; background: #2fb35a; }
.t-item { display: flex; align-items: center; gap: 5px; padding-top: 3px; }
.t-ico { width: 13px; height: 13px; }
.t-prob { margin-left: 14px; }
.t-todo { margin-left: 25px; }
.t-term { margin-left: 23px; }
.t-build { margin-left: 21px; }
.t-jee { margin-left: 21px; gap: 9px; }
.t-spring { margin-left: 25px; }
.t-event { margin-left: auto; margin-right: 37px; position: relative; z-index: 2; }
.ide-status { flex: 1; display: flex; align-items: flex-start; padding: 1px 0 0 8px; gap: 9px; font-size: 14px; line-height: 19px; color: #ccc; white-space: nowrap; }
.st-ico { width: 14px; height: 14px; margin-top: 4px; }
.hscroll { flex: 1; background: linear-gradient(90deg, #9a9a9a 0, #9a9a9a 535px, #cfcfcf 536px); }

/* taskbar */
.taskbar { margin-left: 22px; width: 1711px; height: 45px; position: relative; background: linear-gradient(180deg, #0d2030, #12283a); display: flex; align-items: flex-start; color: #8e9aa3; font-size: 15px; white-space: nowrap; }
.taskbar > * { flex: none; }
.tb-win { width: 56px; height: 42px; display: flex; align-items: center; padding-left: 18px; }
.tb-winlogo { width: 18px; height: 19px; }
.tb-cell { width: 48px; height: 40px; display: flex; align-items: center; justify-content: center; }
.tb-gap { margin-left: 9px; }
.tb-gap2 { margin-right: 5px; }
.tb-vs { margin-left: 6px; }
.tb-dev { margin-left: 5px; }
.tb-m2 { margin-left: 2px; }
.tb-m1 { margin-left: 1px; }
.tb-circle { width: 22px; height: 22px; }
.tb-pc { width: 24px; height: 24px; margin-top: 6px; }
.tb-find { width: 24px; height: 28px; }
.tb-android { width: 24px; height: 28px; }
.tb-ic { width: 26px; height: 26px; flex: none; }
.tb-task { width: 110px; height: 42px; display: flex; align-items: center; gap: 6px; padding-left: 7px; position: relative; }
.tb-task::after { content: ""; position: absolute; left: 0; right: 0; bottom: -3px; height: 3px; background: #2b4a60; }
.tb-folder { width: 16px; height: 30px; margin-right: 4px; flex: none; }
.tb-t1 { margin-left: 6px; }
.tb-active { width: 119px; margin-left: 4px; background: #0b3a60; padding-left: 13px; }
.tb-t3 { margin-left: 4px; padding-left: 7px; }
.tb-t4 { margin-left: 6px; width: 109px; padding-left: 5px; gap: 3px; }
.tb-t5 { width: 110px; padding-left: 3px; }
.tb-t6 { margin-left: 9px; width: 108px; padding-left: 4px; }
.tb-t7 { margin-left: 12px; padding-left: 0; }
.tb-cmd { width: 26px; height: 22px; }
.tb-caret { margin-left: 13px; font-size: 12px; line-height: 36px; color: #7a8a96; }
.tb-tray { margin-left: 31px; padding-top: 11px; }
.tb-plus { width: 18px; height: 18px; }
.tb-clock { margin-left: 106px; padding-top: 22px; font-size: 14px; line-height: 20px; color: #6e7a84; }
.tb-noti { margin-left: 35px; margin-top: 14px; width: 22px; height: 22px; border-radius: 50%; border: 1px solid #31506a; }

/* video overlay */
.shade { position: absolute; left: 22px; top: 0; width: 1713px; height: 62px; background: linear-gradient(180deg, rgba(0,0,0,.68), rgba(0,0,0,.42) 45%, rgba(0,0,0,.03)); pointer-events: none; }
.title { position: absolute; left: 19px; top: 21px; font-size: 16px; line-height: 24px; color: #fff; white-space: nowrap; letter-spacing: .1px; }

.ime { position: absolute; left: 990px; top: 8px; width: 202px; height: 27px; border: 1px solid #666; background: rgba(110,110,110,.35); display: flex; align-items: center; padding-left: 9px; gap: 7px; }
.ime-s { position: absolute; left: -28px; top: -5px; width: 34px; height: 34px; }
.ime-zh { font-size: 16px; font-weight: 700; color: #14497f; }
.ime-p { font-size: 14px; font-weight: 700; color: #14497f; margin: 0 2px 0 8px; }
.ime-i { width: 17px; height: 18px; }
.ime-w { width: 18px; }
.ime-dim { opacity: .8; }

.card { position: absolute; left: 1502px; top: 0; width: 253px; height: 46px; background: #fff; display: flex; align-items: center; border: 1px solid #e0e0e0; }
.card-stripe { position: absolute; left: 0; top: 0; width: 53px; height: 44px; background: #c8f7e2; clip-path: polygon(0 0, 100% 0, 72% 100%, 0 100%); }
.card-logo { position: absolute; left: 0; top: 0; width: 48px; height: 44px; background: linear-gradient(180deg, #2ecb83, #62ea95); clip-path: polygon(0 0, 100% 0, 64% 100%, 0 100%); display: flex; align-items: center; padding-left: 7px; }
.card-e { width: 22px; height: 24px; }
.card-i { display: flex; flex-direction: column; align-items: center; gap: 3px; font-size: 12.500px; line-height: 15px; color: #555; white-space: nowrap; padding-top: 3px; }
.card-i1 { margin-left: 54px; width: 62px; }
.card-i2 { width: 36px; margin: 0 15px; }
.card-i3 { width: 26px; margin-left: 12px; }
.card-sep { width: 1px; height: 22px; background: #e4e4e4; margin-left: 14px; }
.card-i1 + .card-sep { margin-left: 14px; }
.card-i2 + .card-sep { margin-left: 0; }
.card-rec { width: 19px; height: 14px; }
.card-tv { width: 16px; height: 17px; margin-top: -3px; }
.card-gear { width: 17px; height: 17px; color: #22c27a; margin-top: -3px; }

.progress { position: absolute; left: 12px; top: 905px; width: 1731px; height: 1px; background: rgba(255,255,255,.35); }
.progress-on { display: block; width: 1358px; height: 2px; background: #0a9ed8; }

.danmu { position: absolute; left: 442px; top: 927px; width: 30px; height: 18px; border-radius: 9px; background: #7b858d; }
.danmu-k { display: block; width: 18px; height: 18px; border-radius: 50%; background: #f0f0f0; color: #333; font-size: 11px; line-height: 18px; text-align: center; }
.danmu-set { position: absolute; left: 500px; top: 928px; width: 24px; height: 20px; }
.tip { position: absolute; left: 551px; top: 920px; width: 608px; height: 33px; border-radius: 3px; background: rgba(255,255,255,.3); font-size: 13px; line-height: 28px; color: #fff; white-space: nowrap; padding-left: 11px; }
.tip-a { color: #c8ced4; }
.tip-b { margin-left: 6px; }
.tip-send { position: absolute; right: 0; top: 0; width: 60px; height: 33px; background: rgba(255,255,255,.25); border-radius: 0 3px 3px 0; text-align: center; color: #ccc; line-height: 30px; font-size: 13px; }

.ctl-time { position: absolute; left: 83px; top: 925px; font-size: 14.500px; line-height: 20px; color: #f2f2f2; white-space: nowrap; letter-spacing: -.6px; }
.ctl-pause { position: absolute; left: 32px; top: 929px; display: flex; gap: 5px; }
.ctl-pause span { width: 5px; height: 20px; border-radius: 2px; background: #f2f2f2; }
.ctl-q { position: absolute; left: 1262px; top: 924px; font-size: 15.500px; line-height: 20px; font-weight: 700; color: #f2f2f2; white-space: nowrap; }
.ctl-r { position: absolute; left: 1371px; top: 925px; font-size: 15px; line-height: 20px; font-weight: 700; color: #f2f2f2; }
.ctl-vol { position: absolute; left: 1436px; top: 925px; width: 22px; height: 22px; }
.ctl-gear { position: absolute; left: 1489px; top: 925px; width: 22px; height: 22px; color: #eee; }
.ctl-pip { position: absolute; left: 1542px; top: 925px; width: 20px; height: 20px; }
.ctl-wide { position: absolute; left: 1597px; top: 926px; width: 22px; height: 18px; }
.ctl-full { position: absolute; left: 1651px; top: 926px; width: 22px; height: 18px; }
.ctl-tri { position: absolute; left: 1704px; top: 926px; width: 24px; height: 19px; }

.wm-a { position: absolute; left: 1289px; top: 886px; font-size: 33px; line-height: 40px; font-weight: 700; color: rgba(170,170,170,.78); white-space: nowrap; transform: scaleY(1.15); }
.wm-b { position: absolute; left: 1497px; top: 872px; font-size: 54px; line-height: 66px; font-weight: 500; color: rgba(240,240,240,.88); white-space: nowrap; transform: scaleY(1.25); }
.wm-url { position: absolute; left: 1503px; top: 932px; font-size: 15px; line-height: 22px; color: #d8d8d8; white-space: nowrap; }
```
